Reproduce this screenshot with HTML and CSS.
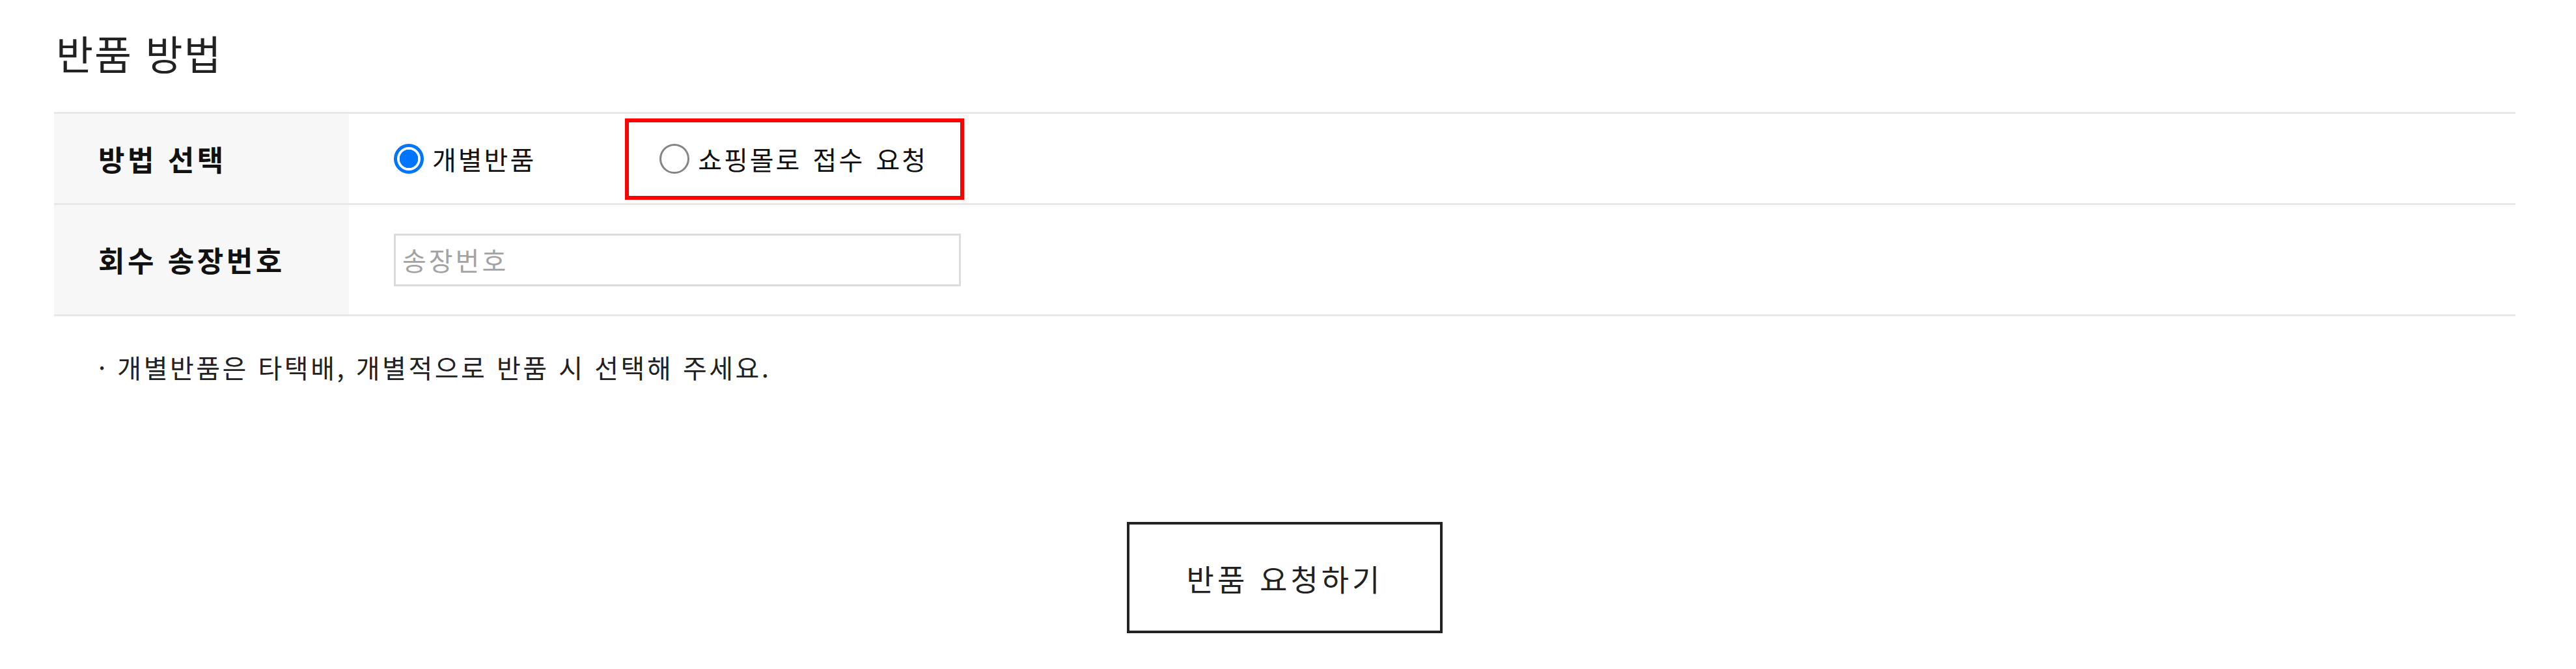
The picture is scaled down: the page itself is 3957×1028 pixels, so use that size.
FILE: index.html
```html
<!DOCTYPE html>
<html lang="ko">
<head>
    <meta charset="utf-8" />
    <title>반품 방법</title>
	<link rel="stylesheet" href="styles.css">
</head>
<body>
	<h2 class="section-title">반품 방법</h2>

	<div class="form-table">
		<div class="form-row">
			<div class="form-label">방법 선택</div>
			<div class="form-value">
				<label class="option">
					<input type="radio" name="returnType" value="single" checked>
					<span>개별반품</span>
				</label>
				<label class="option option-mall">
					<input type="radio" name="returnType" value="mall">
					<span>쇼핑몰로 접수 요청</span>
					<span class="highlight"></span>
				</label>
			</div>
		</div>
		<div class="form-row form-row-tall">
			<div class="form-label">회수 송장번호</div>
			<div class="form-value">
				<input type="text" class="invoice-input" placeholder="송장번호" name="invoice">
			</div>
		</div>
	</div>

	<p class="note">· 개별반품은 타택배, 개별적으로 반품 시 선택해 주세요.</p>

	<div class="button-area">
		<button type="button" class="submit-btn">반품 요청하기</button>
	</div>
</body>
</html>
```

FILE: styles.css
```css
body {
  margin: 0;
  padding: 50px 93px 0 83px;
  background-color: #fff;
  color: #222;
  font-family: "Noto Sans CJK KR", "Noto Sans", sans-serif;
}

.section-title {
  margin: 0 0 60px 3px;
  font-size: 62px;
  font-weight: 400;
  line-height: 1;
  letter-spacing: 2px;
  color: #222;
}

.form-table {
  border-bottom: 3px solid #e8e8e8;
}

.form-row {
  display: grid;
  grid-template-columns: 453px 1fr;
  min-height: 137px;
  border-top: 3px solid #e8e8e8;
}

.form-row-tall {
  min-height: 168px;
}

.form-label {
  display: flex;
  align-items: center;
  padding-left: 68px;
  background-color: #f7f7f7;
  font-size: 44px;
  font-weight: 700;
  letter-spacing: 4.5px;
  color: #111;
}

.form-value {
  display: flex;
  align-items: center;
  padding-left: 69px;
}

.option {
  position: relative;
  display: inline-flex;
  align-items: center;
  height: 46px;
  font-size: 40px;
  letter-spacing: 3px;
  word-spacing: 3px;
  color: #111;
  cursor: pointer;
}

.option + .option {
  margin-left: 190px;
}

.option input[type=radio] {
  appearance: none;
  -webkit-appearance: none;
  box-sizing: border-box;
  width: 46px;
  height: 46px;
  margin: 0 13px 0 0;
  border: 3px solid #858585;
  border-radius: 50%;
  background: #fff;
}

.option input[type=radio]:checked {
  border: 5px solid #0075ff;
  background: radial-gradient(circle, #0075ff 0, #0075ff 14px, #fff 14.5px);
}

.option .highlight {
  position: absolute;
  top: -39px;
  bottom: -40px;
  left: -53px;
  right: -56px;
  border: 6px solid #ff0000;
}

.invoice-input {
  box-sizing: border-box;
  width: 871px;
  height: 81px;
  padding: 0 10px;
  border: 3px solid #dcdcdc;
  font-family: "Noto Sans CJK KR", "Noto Sans", sans-serif;
  font-size: 40px;
  letter-spacing: 4px;
  color: #222;
  outline: none;
}

.invoice-input::placeholder {
  color: #a3a3a3;
}

.note {
  margin: 58px 0 0 0;
  padding-left: 68px;
  font-size: 40px;
  line-height: 1;
  letter-spacing: 3.5px;
  color: #222;
}

.button-area {
  display: flex;
  justify-content: center;
  margin-top: 218px;
}

.submit-btn {
  width: 485px;
  height: 171px;
  border: 4px solid #222;
  background: #fff;
  font-family: "Noto Sans CJK KR", "Noto Sans", sans-serif;
  font-size: 46px;
  letter-spacing: 5px;
  color: #222;
  cursor: pointer;
}
```
